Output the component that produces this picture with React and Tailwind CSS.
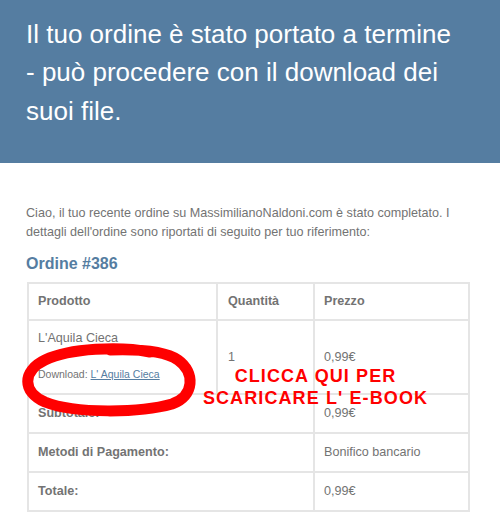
export default function App() {
  const font = { fontFamily: '"Liberation Sans", Arial, sans-serif' };
  return (
    <div className="relative w-[500px] h-[521px] bg-white overflow-hidden" style={font}>
      <div className="h-[163px] bg-[#557da1] pl-[26px] pr-[38px] pt-[15px]">
        <h1 className="text-white text-[26px] leading-[38.3px] font-normal">
          Il tuo ordine è stato portato a termine - può procedere con il download dei suoi file.
        </h1>
      </div>

      <div className="pl-[26px] pr-[34px] pt-[41px]">
        <p className="text-[#737373] text-[12.6px] leading-[19px]">
          Ciao, il tuo recente ordine su MassimilianoNaldoni.com è stato completato. I dettagli dell'ordine sono riportati di seguito per tuo riferimento:
        </p>
        <h2 className="mt-[12px] text-[#557da1] text-[16px] leading-[20px] font-bold">Ordine #386</h2>
      </div>

      <div className="ml-[27px] mt-[8px] w-[443px] border-2 border-[#e5e5e5] text-[#737373] text-[12.6px] leading-[19px]">
        <div className="flex h-[35px] font-bold">
          <div className="w-[187px] flex items-center pl-[9px]">Prodotto</div>
          <div className="w-[97px] border-l-2 border-[#e5e5e5] flex items-center pl-[10px]">Quantità</div>
          <div className="flex-1 border-l-2 border-[#e5e5e5] flex items-center pl-[9px]">Prezzo</div>
        </div>
        <div className="flex h-[74px] border-t-2 border-[#e5e5e5]">
          <div className="w-[187px] pl-[9px] pt-[8px]">
            <div>L'Aquila Cieca</div>
            <div className="mt-[18px] text-[10.5px] leading-[16px]">
              Download: <span className="text-[#557da1] underline">L' Aquila Cieca</span>
            </div>
          </div>
          <div className="w-[97px] border-l-2 border-[#e5e5e5] flex items-center pl-[10px]">1</div>
          <div className="flex-1 border-l-2 border-[#e5e5e5] flex items-center pl-[9px]">0,99€</div>
        </div>
        <div className="flex h-[39px] border-t-2 border-[#e5e5e5]">
          <div className="w-[284px] flex items-center pl-[9px] font-bold">Subtotale:</div>
          <div className="flex-1 border-l-2 border-[#e5e5e5] flex items-center pl-[9px]">0,99€</div>
        </div>
        <div className="flex h-[39px] border-t-2 border-[#e5e5e5]">
          <div className="w-[284px] flex items-center pl-[9px] font-bold">Metodi di Pagamento:</div>
          <div className="flex-1 border-l-2 border-[#e5e5e5] flex items-center pl-[9px]">Bonifico bancario</div>
        </div>
        <div className="flex h-[39px] border-t-2 border-[#e5e5e5]">
          <div className="w-[284px] flex items-center pl-[9px] font-bold">Totale:</div>
          <div className="flex-1 border-l-2 border-[#e5e5e5] flex items-center pl-[9px]">0,99€</div>
        </div>
      </div>

      <svg className="absolute left-0 top-0 pointer-events-none" width="500" height="521" viewBox="0 0 500 521">
        <path
          d="M150 352 C120 346 70 348 45 360 C22 371 22 392 45 402 C75 414 140 413 172 404 C195 396 195 372 178 360 C165 351 140 349 110 350"
          fill="none"
          stroke="#ff0000"
          strokeWidth="11"
          strokeLinecap="round"
        />
      </svg>

      <div className="absolute left-[195px] top-[365px] w-[241px] text-center text-[#ff0000] text-[18px] leading-[22px] font-bold tracking-[1.1px]">
        <div>CLICCA QUI PER</div>
        <div>SCARICARE L' E-BOOK</div>
      </div>
    </div>
  );
}
